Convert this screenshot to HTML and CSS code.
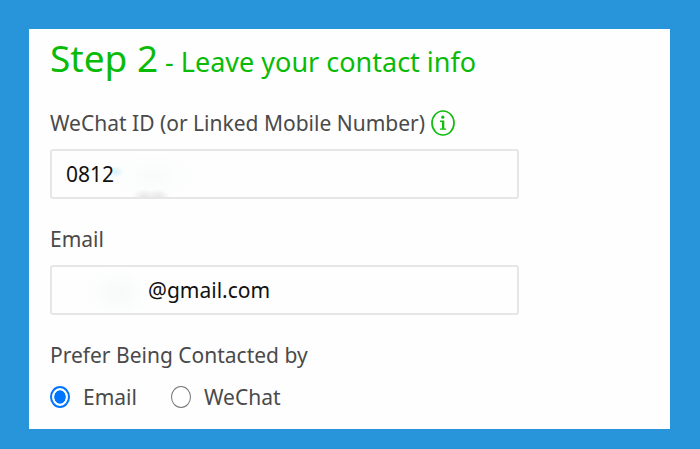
FILE: index.html
```
<!DOCTYPE html>
<html lang="en">
<head>
    <meta charset="UTF-8">
    <meta name="viewport" content="width=device-width, initial-scale=1.0">
    <title>Step 2 - Leave your contact info</title>
    <link rel="stylesheet" href="styles.css">
</head>
<body>
    <form class="panel">
        <h1><span class="step">Step 2</span> - Leave your contact info</h1>

        <div class="field">
            <div class="label-row">
                <label for="wechat-id">WeChat ID (or Linked Mobile Number)</label>
                <svg class="info" viewBox="0 0 24 26" aria-hidden="true">
                    <ellipse cx="12" cy="13" rx="11" ry="12" fill="none" stroke="#12bb10" stroke-width="1.7"/>
                    <ellipse cx="11.8" cy="7.2" rx="1.6" ry="1.6"/>
                    <path d="M9 10.6h4.3v7.8h1.9v1.4H8.9v-1.4H11v-6.4H9z"/>
                </svg>
            </div>
            <input type="text" id="wechat-id" class="text-input masked-end" value="0812">
        </div>

        <div class="field">
            <label for="email">Email</label>
            <input type="text" id="email" class="text-input masked-start" value="@gmail.com">
        </div>

        <fieldset>
            <legend>Prefer Being Contacted by</legend>
            <div class="options">
                <label class="option"><input type="radio" name="contact" value="email" checked>Email</label>
                <label class="option"><input type="radio" name="contact" value="wechat">WeChat</label>
            </div>
        </fieldset>
    </form>
</body>
</html>
```

FILE: styles.css
```
* {
    box-sizing: border-box;
}
body {
    font-family: "Noto Sans", "Open Sans", sans-serif;
    font-size: 21px;
    line-height: 32px;
    background: #2894d9;
    color: #4a4a4a;
    margin: 0;
    padding: 29px 30px 20px 29px;
}
.panel {
    background: #fefefe;
    padding: 4px 21px 16px;
}
h1 {
    margin: 0 0 20px;
    font-size: 27px;
    font-weight: normal;
    line-height: 50px;
    color: #09bb07;
}
.step {
    font-size: 37px;
}
.field {
    max-width: 469px;
    margin-bottom: 24px;
}
.field label {
    display: block;
}
.label-row {
    display: flex;
    align-items: center;
    gap: 6px;
    white-space: nowrap;
}
.info {
    flex: none;
    width: 24px;
    height: 26px;
    fill: #12bb10;
}
.text-input {
    display: block;
    width: 100%;
    height: 50px;
    margin-top: 10px;
    padding: 0 14px;
    border: 2px solid #e6e6e6;
    border-radius: 3px;
    background: #fefefe;
    color: #111;
    font: inherit;
    outline: none;
}
.masked-end {
    background-image:
        radial-gradient(ellipse 12px 8px at 92px 46px, #e6e6e6, transparent),
        radial-gradient(ellipse 12px 8px at 106px 46px, #e6e6e6, transparent),
        radial-gradient(ellipse 8px 6px at 64px 21px, #d8f1fc, transparent),
        radial-gradient(ellipse 44px 24px at 100px 26px, #f9fbfb, transparent);
}
.masked-start {
    padding-left: 96px;
    background-image: radial-gradient(ellipse 34px 26px at 66px 26px, #f7faf9, transparent);
}
fieldset {
    margin: 0;
    padding: 0;
    border: 0;
}
legend {
    padding: 0;
}
.options {
    display: flex;
    gap: 34px;
    margin-top: 10px;
}
.option {
    display: flex;
    align-items: center;
    gap: 13px;
}
.option input {
    appearance: none;
    width: 20px;
    height: 22px;
    margin: 0;
    border: 1px solid #767676;
    border-radius: 50%;
    background: #fff;
}
.option input:checked {
    border: 2px solid #0075ff;
    background: radial-gradient(ellipse 6px 7px, #0075ff 90%, #fff);
}
```
